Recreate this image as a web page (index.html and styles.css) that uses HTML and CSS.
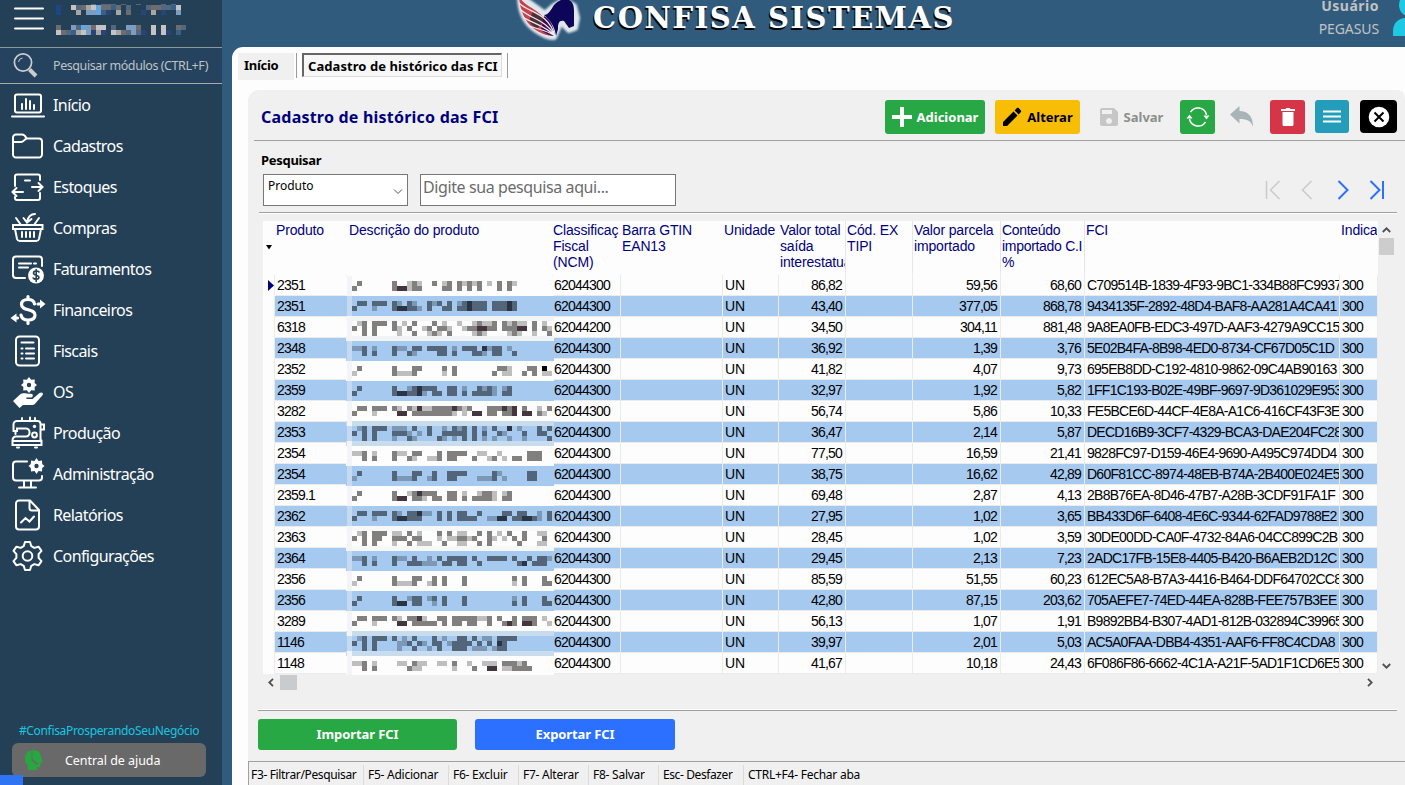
FILE: index.html
```html
<!DOCTYPE html>
<html lang="pt-BR">
<head>
<meta charset="utf-8">
<title>Confisa Sistemas</title>
<link rel="stylesheet" href="styles.css">
</head>
<body>
<div class="app">
  <aside class="sidebar">
    <div class="brand">
      <svg class="burger" width="30" height="24" viewBox="0 0 30 24" stroke="#fff" stroke-width="2" stroke-linecap="round"><path d="M1 2.5h28M1 12.5h28M1 22.5h28"/></svg>
      <svg class="company" id="company" width="132" height="32"></svg>
    </div>
    <div class="search">
      <svg class="search-icon" width="28" height="28" viewBox="0 0 28 28" fill="none" stroke="#c9cdd0"><circle cx="10" cy="9.500" r="8.600" stroke-width="1.700"/><path d="M5.500 9a4.500 4.500 0 0 1 4-4" stroke-width="1"/><path d="M16.500 16.500l6.500 6.500" stroke-width="4"/></svg>
      <span>Pesquisar módulos (CTRL+F)</span>
    </div>
    <nav class="menu">
      <a class="item"><svg viewBox="0 0 36 36"><rect x="5" y="7.500" width="26" height="18" rx="2"/><path d="M2 29.500h32M12 22v-5M16 22v-10M20 22v-8M24 22v-4"/></svg><span>Início</span></a>
      <a class="item"><svg viewBox="0 0 36 36"><path d="M3 9.500a3 3 0 0 1 3-3h6c2 0 3 1 4 3l1 1h12a3 3 0 0 1 3 3v13a3 3 0 0 1-3 3H6a3 3 0 0 1-3-3zM3 14h8c3 0 3-3 6-3.500"/></svg><span>Cadastros</span></a>
      <a class="item"><svg viewBox="0 0 36 36"><path d="M5 17V7.500a2 2 0 0 1 2-2h21a2 2 0 0 1 2 2V11M5 28v1a2 2 0 0 0 2 2h21a2 2 0 0 0 2-2v-5M15 11.500h5"/><path d="M22 18h10.500M28.500 14l4 4-4 4M13 23H2.500M6.500 19l-4 4 4 4"/></svg><span>Estoques</span></a>
      <a class="item"><svg viewBox="0 0 36 36"><path d="M3 15h29.500v4H3zM5 19l2 10a3 3 0 0 0 3 2h16a3 3 0 0 0 3-2l2-10M12 22v5M16 22v5M20 22v5M24 22v5M6 8l5 7M29 8l-5 7M25 4c-5 0-7 3-8 8M13.500 8l3.500 4.500L21.500 9"/></svg><span>Compras</span></a>
      <a class="item"><svg viewBox="0 0 36 36"><path d="M15 27H6a3 3 0 0 1-3-3V8.500a3 3 0 0 1 3-3h23a3 3 0 0 1 3 3V15M9 12.500h12M9 16.500h9M24 12.500h2"/><circle cx="26" cy="24.500" r="8" fill="#fff" stroke="none"/><path class="ink" d="M29 21c-1-1.500-5.500-1.600-5.500 1 0 2.600 5.500 1.800 5.500 4.300s-4.800 2.300-5.800.7M26.200 18.500v12"/></svg><span>Faturamentos</span></a>
      <a class="item"><svg viewBox="0 0 36 36" class="bold"><path d="M24.500 12c-.5-3.500-3-4.500-6.500-4.500-4 0-6.500 1.800-6.500 5 0 7 13.500 3.500 13.500 10.500 0 3.400-3 5-7 5s-6.500-1.800-7-5M18 4.500v3M18 28.500V31.500"/><path d="M28 12h3M7.500 26H4" /><path d="M30 7.500L35.500 12 30 16.500zM6.500 21.500L.5 26l6 4.500z" fill="#fff" stroke="none"/></svg><span>Financeiros</span></a>
      <a class="item"><svg viewBox="0 0 36 36"><rect x="6" y="3.500" width="23" height="29" rx="3.500"/><path d="M11.500 9.500h12M11.500 15.500h1M16 15.500h8M11.500 20.500h1M16 20.500h8M11.500 25.500h1M16 25.500h8"/></svg><span>Fiscais</span></a>
      <a class="item"><svg viewBox="0 0 36 36"><path fill="#fff" stroke="none" d="M19 3l2.200 2.700 3.600-.1-.2 3.400 2.400 2-2.400 2 .2 3.400-3.600-.1L19 19l-2.200-2.700-3.600.1.200-3.400-2.400-2 2.400-2-.2-3.400 3.600.1z"/><circle cx="19" cy="11" r="2.200" fill="#244057" stroke="none"/><path fill="#fff" stroke="none" d="M3 27l6.500-6c2.500-2 5-1.800 8-1.300h3.500c2.500 0 2.500 3.600 0 3.800H17c-1 .2-1 1.400 0 1.500h5.500l7-6c2-1.500 4.500.2 3 2.300l-7.500 8.500c-1 1-2 1.300-4 1.300h-8l-3.500 3z"/></svg><span>OS</span></a>
      <a class="item"><svg viewBox="0 0 36 36"><path d="M4 26h26.500V9a3 3 0 0 0-3-3H7a3.500 3.500 0 0 0-3.500 3.500V16h3.500v-2.500h9a3.500 3.500 0 0 1 3.500 3.500v1a3.500 3.500 0 0 1-3.500 3.500H6c-3 0-3.500 2.500-3.500 4.500v4h29v-4.500M12 6V3M20 6V2.500M25 6V3M5.500 16.500v2.500M31 9.500h3v5h-3"/><circle cx="24.500" cy="20" r="2.400"/><circle cx="24.500" cy="11.500" r="1.700" fill="#fff" stroke="none"/><path d="M7 32.500h2M25 32.500h2"/></svg><span>Produção</span></a>
      <a class="item"><svg viewBox="0 0 36 36"><path d="M17 5.500H6a3 3 0 0 0-3 3v13a3 3 0 0 0 3 3h23a3 3 0 0 0 3-3V20M14 25v5M21 25v5M9 31.500h17"/><path fill="#fff" stroke="none" d="M26.500 2l2 2.900 3.500-.3.200 3.400 2.300 2-2.300 2-.2 3.400-3.500-.3-2 3-2-3-3.500.3-.2-3.400-2.300-2 2.300-2 .2-3.400 3.500.3z"/><circle cx="26.500" cy="10" r="2.200" fill="#244057" stroke="none"/></svg><span>Administração</span></a>
      <a class="item"><svg viewBox="0 0 36 36"><path d="M6 6.500a3 3 0 0 1 3-3h11L29 13v16.500a3 3 0 0 1-3 3H9a3 3 0 0 1-3-3zM19.500 4v7a2.500 2.500 0 0 0 2.500 2.500h6.500M11 25.500l4.500-4.500 4 3.500 4.500-5"/></svg><span>Relatórios</span></a>
      <a class="item"><svg viewBox="0 0 36 36"><path d="M15 4h5l1.300 4.200 3 1.700 4.200-1.200 3 4.200-2.900 3.300v3.600l2.900 3.300-3 4.200-4.200-1.200-3 1.700L20 32h-5l-1.300-4.200-3-1.700-4.200 1.200-3-4.200 2.900-3.300v-3.600L3.500 12.900l3-4.200 4.200 1.200 3-1.700z" stroke-linejoin="round"/><circle cx="17.500" cy="18" r="4.800"/></svg><span>Configurações</span></a>
    </nav>
    <div class="side-foot">
      <div class="hashtag">#ConfisaProsperandoSeuNegócio</div>
      <div class="help">
        <svg width="20" height="22" viewBox="0 0 20 22"><path fill="#27a83e" d="M8.500 1v9l6 5-1.500 1-5.500-4.500V1.200C3 2 1 5.500 1 9.500c0 3.500 1 5 3 7V21h9v-3h3l.5-4 2.500-1.500-2-4C17 4 14 1.300 10 1z"/></svg>
        <span>Central de ajuda</span>
      </div>
    </div>
    <div class="corner"></div>
  </aside>

  <main class="main">
    <header class="top">
      <svg class="logo" width="72" height="46" viewBox="0 0 72 46">
        <defs><filter id="glow" x="-20%" y="-20%" width="140%" height="140%"><feGaussianBlur stdDeviation="1.300"/></filter></defs>
        <g fill="#e8eef2" stroke="#dfe7ec" stroke-width="6" stroke-linejoin="round" filter="url(#glow)"><path d="M4-4c0 14 4 26 16 34 8 5 12 7 18 7l4-9 2-9 4 6 5 5 6-2 2-10-3-12-10-6-10 6-9 8z"/></g>
        <path fill="#c7404b" d="M3-3c9 13 26 12 36 39C31 36 6 32 3-3z"/>
        <path fill="#4b3038" d="M17 11c5 2 9 5 12 9l-8 9c-4-3-6-5-8-8z"/>
        <path fill="#3a0b55" d="M28 16c6 3 9 9 11 20-5 0-10-3-14-6z"/>
        <path fill="#0d0557" d="M28 15c4 0 7-5 10-10 4-4 8-6 13-7l2 2c4 2 5 6 5 11v15l-5 2-5-7c-5-1-6 2-6 8l-2 7c-1-8-4-14-12-21z"/>
        <path fill="none" stroke="#eee8ed" stroke-width="1.200" d="M3 3c10 10 29 9 36 33M4 9c8 9 26 10 35 27M7 17c8 6 22 8 32 19M13 26c8 3 18 4 26 10"/>
      </svg>
      <h1 class="title">CONFISA SISTEMAS</h1>
      <div class="user"><b>Usuário</b><span>PEGASUS</span></div>
      <svg class="avatar" width="40" height="36" viewBox="0 0 40 36" fill="#1fc8e3"><circle cx="18" cy="5" r="12"/><path d="M0 36V31c0-8 6-13 12-13h12c8 0 12 6 12 18z"/></svg>
    </header>
    <section class="sheet">
      <div class="tabs">
        <div class="tab">Início</div>
        <div class="tab-slot"><div class="tab active">Cadastro de histórico das FCI</div></div>
      </div>
      <div class="panel">
        <div class="toolbar">
          <h2>Cadastro de histórico das FCI</h2>
          <div class="btn add"><svg width="20" height="20" viewBox="0 0 20 20"><path stroke="#fff" stroke-width="4" d="M10 0v20M0 10h20"/></svg><span>Adicionar</span></div>
          <div class="btn edit"><svg width="20" height="20" viewBox="0 0 20 20"><path d="M1 15v4h4L15.500 8.500l-4-4zM12.600 3.400l4 4 2.100-2.100c.6-.6.6-1.500 0-2.100l-1.900-1.900c-.6-.6-1.500-.6-2.100 0z"/></svg><span>Alterar</span></div>
          <div class="btn save"><svg width="18" height="18" viewBox="0 0 18 18"><path fill="#c6c6c6" fill-rule="evenodd" d="M2 0h12l4 4v12a2 2 0 0 1-2 2H2a2 2 0 0 1-2-2V2a2 2 0 0 1 2-2zM2 2v4h10V2zM9 10a3 3 0 1 0 .01 0z"/></svg><span>Salvar</span></div>
          <div class="btn refresh"><svg width="24" height="22" viewBox="0 0 24 22" fill="none" stroke="#fff" stroke-width="1.500"><path d="M4.500 6.200A8.700 8.700 0 0 1 20.500 9M3.500 13a8.700 8.700 0 0 0 16 2.800"/><path fill="#fff" stroke="none" d="M.5 12.500l3-4 3 4zM17.500 9.500h6l-3 4z"/></svg></div>
          <svg class="undo" width="24" height="22" viewBox="0 0 24 22"><path fill="#a9b4ba" d="M0 8.500L9.500 0v5C18 5 23 10 23 21c-2-6-5.500-8-13.500-8v4.500z"/></svg>
          <div class="btn trash"><svg width="14" height="18" viewBox="0 0 14 18" fill="#fff"><path d="M0 1h4.500l1-1h3l1 1H14v2H0zM1.500 4h11v12.500a1.500 1.500 0 0 1-1.500 1.500H3a1.500 1.500 0 0 1-1.500-1.500z"/></svg></div>
          <div class="btn list"><svg width="18" height="13" viewBox="0 0 18 13" stroke="#fff" stroke-width="2"><path d="M0 1.500h18M0 6.500h18M0 11.500h18"/></svg></div>
          <div class="btn close"><svg width="22" height="22" viewBox="0 0 22 22"><circle cx="11" cy="11" r="10.300" fill="#fff"/><path stroke="#000" stroke-width="2" d="M6.500 6.500l9 9M15.500 6.500l-9 9"/></svg></div>
        </div>
        <div class="filters">
          <div class="filter-label">Pesquisar</div>
          <div class="fields">
            <div class="select"><span>Produto</span><svg width="10" height="6" viewBox="0 0 10 6" fill="none" stroke="#555"><path d="M1 .5l4 4 4-4"/></svg></div>
            <div class="input">Digite sua pesquisa aqui...</div>
            <div class="pager">
              <svg width="16" height="20" viewBox="0 0 16 20" class="off"><path d="M1.500 1v18M14.500 1l-9 9 9 9"/></svg>
              <svg width="12" height="20" viewBox="0 0 12 20" class="off"><path d="M10.500 1l-9 9 9 9"/></svg>
              <svg width="12" height="20" viewBox="0 0 12 20"><path d="M1.500 1l9 9-9 9"/></svg>
              <svg width="16" height="20" viewBox="0 0 16 20"><path d="M1.500 1l9 9-9 9M14 1v18"/></svg>
            </div>
          </div>
        </div>
        <div class="grid-area">
          <div class="grid" id="grid">
            <div class="row head">
              <div class="mark"><svg width="6" height="6" viewBox="0 0 6 6"><path d="M0 1h6L3 5.500z"/></svg></div>
              <div>Produto</div><div>Descrição do produto</div><div>Classificaç<br>Fiscal<br>(NCM)</div><div>Barra GTIN<br>EAN13</div><div>Unidade</div><div>Valor total<br>saída<br>interestatual</div><div>Cód. EX<br>TIPI</div><div>Valor parcela<br>importado</div><div>Conteúdo<br>importado C.I<br>%</div><div>FCI</div><div>Indica</div>
            </div>
          </div>
          <div class="vbar">
            <svg width="9" height="6" viewBox="0 0 9 6"><path d="M.8 5l3.700-3.700L8.200 5"/></svg>
            <div class="thumb"></div>
            <svg width="9" height="6" viewBox="0 0 9 6"><path d="M.8 1l3.700 3.700L8.200 1"/></svg>
          </div>
        </div>
        <div class="hbar">
          <svg width="6" height="9" viewBox="0 0 6 9"><path d="M5 .8L1.300 4.500 5 8.200"/></svg>
          <div class="thumb"></div>
          <svg width="6" height="9" viewBox="0 0 6 9"><path d="M1 .8l3.700 3.700L1 8.200"/></svg>
        </div>
        <div class="actions">
          <div class="action import">Importar FCI</div>
          <div class="action export">Exportar FCI</div>
        </div>
        <footer class="status">
          <span class="s1">F3- Filtrar/Pesquisar</span><span class="s2">F5- Adicionar</span><span class="s3">F6- Excluir</span><span class="s4">F7- Alterar</span><span class="s5">F8- Salvar</span><span class="s6">Esc- Desfazer</span><span class="s7">CTRL+F4- Fechar aba</span>
        </footer>
      </div>
    </section>
  </main>
</div>
<script src="app.js"></script>
</body>
</html>
```

FILE: styles.css
```css
* { box-sizing: border-box; }
body { margin: 0; font-family: "Noto Sans", sans-serif; overflow: hidden; }
.app { display: flex; width: 1405px; height: 785px; background: #305b7d; overflow: hidden; }

/* sidebar */
.sidebar { position: relative; width: 222px; height: 785px; background: #244057; display: flex; flex-direction: column; color: #fff; }
.brand { height: 48px; border-bottom: 1px solid #8d989f; display: flex; padding: 5px 0 0 14px; gap: 12px; }
.burger { margin-top: 1px; fill: none; }
.company { overflow: visible; }
.search { height: 36px; background: #25435f; border-bottom: 1px solid #a5abad; display: flex; align-items: center; padding-left: 13px; color: #bfc3c5; font-size: 12.5px; white-space: nowrap; }
.search-icon { fill: none; margin: 3px 12px 0 0; flex: none; }
.search span { letter-spacing: -0.42px; }
.menu { display: flex; flex-direction: column; }
.item { height: 41px; display: flex; align-items: center; padding-left: 10px; gap: 7px; font-size: 16px; letter-spacing: -0.58px; white-space: nowrap; line-height: 24px; }
.item svg { width: 36px; height: 36px; fill: none; stroke: #fff; stroke-width: 2; stroke-linecap: round; }
.item svg.bold { stroke-width: 3.200; }
.item svg .ink { stroke: #244057; stroke-width: 1.600; }
.side-foot { margin-top: auto; padding: 0 16px 8px 12px; }
.hashtag { color: #1bc5df; font-size: 12px; text-align: center; line-height: 20px; margin-bottom: 2px; white-space: nowrap; letter-spacing: -0.33px; }
.help { height: 34px; border-radius: 6px; background: #696969; display: flex; align-items: center; padding-left: 12px; gap: 21px; font-size: 12.5px; letter-spacing: -0.05px; white-space: nowrap; }
.corner { position: absolute; left: 0; bottom: 0; width: 23px; height: 10px; background: #2f74f5; }

/* header */
.main { flex: 1; min-width: 0; display: flex; flex-direction: column; padding-left: 10px; }
.top { height: 47px; display: flex; position: relative; z-index: 1; }
.logo { margin-left: 284px; flex: none; overflow: visible; }
.title { margin: 0 0 0 5px; font: bold 29px/36px "DejaVu Serif", serif; color: #fff; text-shadow: -1px 2px 0 #000; white-space: nowrap; width: 400px; height: 36px; letter-spacing: 1.550px; }
.user { margin-left: auto; margin-top: -6px; display: flex; flex-direction: column; text-align: right; color: #c2c2c2; font-size: 14px; line-height: 23px; letter-spacing: -0.1px; }
.user b { letter-spacing: 0.5px; }
.avatar { margin-left: 14px; margin-right: -28px; flex: none; }

/* content */
.sheet { flex: 1; min-height: 0; background: #fdfdfd; border-radius: 11px 0 0 0; padding-left: 6px; }
.tabs { height: 43px; padding-top: 6px; display: flex; font: bold 13px/26px "Noto Sans", sans-serif; color: #000; white-space: nowrap; }
.tab { width: 56px; height: 27px; background: #f0f0f0; padding-left: 6px; letter-spacing: -0.3px; line-height: 25px; }
.tab-slot { margin-left: 2px; width: 212px; height: 25px; border-left: 1px solid #9b9b9b; border-right: 1px solid #9b9b9b; padding-left: 5px; }
.tab.active { width: 200px; height: 24px; line-height: 22px; background: #f7f7f7; border: 1px solid #dcdcdc; border-top: 2px solid #666; border-left: 2px solid #666; padding-left: 4px; letter-spacing: 0.070px; }
.panel { margin-left: 10px; height: 695px; background: #f0f0f0; border-radius: 11px 8px 0 0; display: flex; flex-direction: column; }
.toolbar { height: 51px; margin-left: 6px; padding: 10px 8px 0 7px; border-bottom: 1px solid #a0a0a0; display: flex; align-items: flex-start; }
.toolbar h2 { margin: 0 auto 0 0; font-size: 16px; line-height: 34px; color: #00007e; letter-spacing: 0.220px; white-space: nowrap; }
.btn { height: 34px; border-radius: 3px; display: flex; align-items: center; justify-content: center; font-weight: bold; font-size: 13px; color: #fff; white-space: nowrap; flex: none; gap: 5px; }
.add { width: 100px; background: #28a745; margin-right: 10px; }
.edit { width: 85px; background: #f8bd05; color: #000; margin-right: 18px; }
.save { width: 67px; color: #8b8f8b; margin-right: 15px; gap: 6px; }
.refresh { width: 35px; background: #28a745; margin-right: 15px; }
.undo { margin: 6px 16px 0 0; flex: none; }
.trash { width: 35px; background: #d53546; margin-right: 10px; }
.list { width: 34px; height: 33px; background: #239db9; margin-right: 11px; }
.close { width: 37px; height: 33px; background: #000; border-radius: 4px; }

.filters { height: 73px; margin: 0 8px 0 11px; border-bottom: 1px solid #a0a0a0; box-shadow: 0 1px 0 #fff; padding: 10px 0 0 2px; }
.filter-label { font-weight: bold; font-size: 13px; line-height: 19px; letter-spacing: -0.3px; color: #000; }
.fields { display: flex; padding: 4px 0 0 2px; }
.select { width: 145px; height: 32px; border: 1px solid #777; background: #fff; font-size: 12px; line-height: 22px; padding: 0 4px; display: flex; justify-content: space-between; align-items: flex-start; }
.select svg { margin-top: 14px; }
.input { width: 256px; height: 32px; border: 1px solid #777; background: #fff; margin-left: 12px; padding-left: 2px; font-size: 16px; line-height: 25px; color: #6b6b6b; white-space: nowrap; letter-spacing: -0.4px; }
.pager { margin-left: auto; padding: 6px 12px 0 0; display: flex; }
.pager svg { fill: none; stroke: #2b70ff; stroke-width: 2; margin-left: 20px; }
.pager svg:nth-child(3) { margin-left: 24px; }
.pager .off { stroke: #c9c9c9; stroke-width: 1.500; }

/* table */
.grid-area { display: flex; margin: 8px 0 0 15px; height: 453px; }
.grid { position: relative; width: 1115px; height: 453px; background: #fdfdfd; font: 14px/16px "Liberation Sans", Arial, sans-serif; color: #000; }
.row { display: grid; grid-template-columns: 12px 72px 206px 68px 102px 56px 67px 67px 88px 84px 255px 38px; height: 21px; }
.row > div { border-right: 1px solid #ebebeb; border-bottom: 1px solid #ebebeb; overflow: hidden; white-space: nowrap; line-height: 20px; padding-left: 2px; letter-spacing: -0.8px; }
.row > div:first-child { border-bottom-color: #fdfdfd; padding: 5px 0 0 5px; line-height: 0; }
.row.alt > div { background: #a6c9f0; }
.row.alt > div:first-child { background: #fdfdfd; }
.row > div:nth-child(4) { padding-left: 1px; }
.row > .num { text-align: right; padding-right: 3px; }
.row > .code { letter-spacing: -0.740px; }
.row > .unit { letter-spacing: 0; }
.row.head { height: 54px; color: #00007e; }
.row.head > div { border-color: transparent; line-height: 16px; padding: 1px 0 0 1px; letter-spacing: -0.15px; }
.row.head > div:nth-child(n+7):nth-child(-n+10) { border-right-color: #e2e8ea; }
.row.head > div:nth-child(3) { padding-left: 2px; }
.row.head > div:nth-child(4) { padding-left: 0; }
.row.head > div:nth-child(10) { letter-spacing: -0.3px; }
.row.head > .mark { padding: 23px 0 0 3px; line-height: 0; }
.mosaic { position: absolute; left: 82px; top: 55px; }
.vbar { width: 16px; display: flex; flex-direction: column; align-items: center; padding: 6px 0 5px; fill: none; stroke: #505050; stroke-width: 1.800; }
.vbar .thumb { width: 15px; height: 17px; background: #cdcdcd; margin: 5px 0 auto; }
.hbar { height: 16px; margin: 0 32px 0 20px; display: flex; align-items: center; fill: none; stroke: #505050; stroke-width: 1.800; }
.hbar .thumb { width: 17px; height: 15px; background: #c9cbcc; margin: 0 auto 0 6px; }

.actions { margin: 19px 8px 0 10px; border-top: 1px solid #fff; box-shadow: inset 0 1px 0 #a0a0a0; height: 52px; display: flex; padding-top: 9px; gap: 18px; }
.action { width: 200px; height: 31px; border-radius: 3px; color: #fff; font-weight: bold; font-size: 13px; line-height: 31px; text-align: center; letter-spacing: -0.1px; }
.import { width: 199px; background: #28a745; }
.export { background: #2b70ff; }
.status { flex: 1; border-top: 1px solid #a0a0a0; border-left: 1px solid #a0a0a0; display: flex; padding-top: 3px; font-size: 12px; line-height: 20px; white-space: nowrap; letter-spacing: -0.25px; }
.status span { padding-left: 4px; height: 20px; border-right: 1px solid #dcdcdc; }
.status .s1 { width: 115px; padding-left: 2px; letter-spacing: -0.35px; }
.status .s2 { width: 85px; }
.status .s3 { width: 70px; }
.status .s4 { width: 70px; }
.status .s5 { width: 70px; }
.status .s6 { width: 85px; letter-spacing: -0.4px; }
.status .s7 { border: 0; }
```

FILE: app.js
```js
const rows = [
  ["2351", "62044300", "86,82", "59,56", "68,60", "C709514B-1839-4F93-9BC1-334B88FC9937"],
  ["2351", "62044300", "43,40", "377,05", "868,78", "9434135F-2892-48D4-BAF8-AA281A4CA41"],
  ["6318", "62044200", "34,50", "304,11", "881,48", "9A8EA0FB-EDC3-497D-AAF3-4279A9CC15"],
  ["2348", "62044300", "36,92", "1,39", "3,76", "5E02B4FA-8B98-4ED0-8734-CF67D05C1D"],
  ["2352", "62044300", "41,82", "4,07", "9,73", "695EB8DD-C192-4810-9862-09C4AB90163"],
  ["2359", "62044300", "32,97", "1,92", "5,82", "1FF1C193-B02E-49BF-9697-9D361029E953"],
  ["3282", "62044300", "56,74", "5,86", "10,33", "FE5BCE6D-44CF-4E8A-A1C6-416CF43F3E"],
  ["2353", "62044300", "36,47", "2,14", "5,87", "DECD16B9-3CF7-4329-BCA3-DAE204FC28"],
  ["2354", "62044300", "77,50", "16,59", "21,41", "9828FC97-D159-46E4-9690-A495C974DD4"],
  ["2354", "62044300", "38,75", "16,62", "42,89", "D60F81CC-8974-48EB-B74A-2B400E024E5"],
  ["2359.1", "62044300", "69,48", "2,87", "4,13", "2B8B76EA-8D46-47B7-A28B-3CDF91FA1F"],
  ["2362", "62044300", "27,95", "1,02", "3,65", "BB433D6F-6408-4E6C-9344-62FAD9788E2"],
  ["2363", "62044300", "28,45", "1,02", "3,59", "30DE00DD-CA0F-4732-84A6-04CC899C2B"],
  ["2364", "62044300", "29,45", "2,13", "7,23", "2ADC17FB-15E8-4405-B420-B6AEB2D12C"],
  ["2356", "62044300", "85,59", "51,55", "60,23", "612EC5A8-B7A3-4416-B464-DDF64702CC8"],
  ["2356", "62044300", "42,80", "87,15", "203,62", "705AEFE7-74ED-44EA-828B-FEE757B3EE"],
  ["3289", "62044300", "56,13", "1,07", "1,91", "B9892BB4-B307-4AD1-812B-032894C39965"],
  ["1146", "62044300", "39,97", "2,01", "5,03", "AC5A0FAA-DBB4-4351-AAF6-FF8C4CDA8"],
  ["1148", "62044300", "41,67", "10,18", "24,43", "6F086F86-6662-4C1A-A21F-5AD1F1CD6E5"]
];

const grid = document.getElementById("grid");
rows.forEach((r, i) => {
  const row = document.createElement("div");
  row.className = "row" + (i % 2 ? " alt" : "");
  const arrow = i ? "" : '<svg width="6" height="11" viewBox="0 0 6 11"><path fill="#00007e" d="M0 0l6 5.500L0 11z"/></svg>';
  row.innerHTML = `<div>${arrow}</div><div>${r[0]}</div><div></div><div>${r[1]}</div><div></div><div class="unit">UN</div>` +
    `<div class="num">${r[2]}</div><div></div><div class="num">${r[3]}</div><div class="num">${r[4]}</div><div class="code">${r[5]}</div><div>300</div>`;
  grid.append(row);
});

// Censored descriptions: [top, kind, line, line, ...]; each mark is "cells + shade" on a 5px raster
const blocks = [
  [281, "w", "1b 8b 11a 12b 13a 16b 18a 19b 21b 22a 23b 24a 25b 27a 29b 31b 32a", "0b 8b 9-10c 11a 12-13b 18-19b 21b 23b 25b 29b 31b"],
  [301, "b", "1-2b 4-6b 8b 9a 11b 12a 15b 16a 17b 19b 21a 22b 23c 24-26b 28-30b 31c 32b", "0b 4a 8b 9-10c 11-12b 13a 15b 18-19b 21-22b 23c 24-26b 28-30b 31c 32b"],
  [321, "w", "1a 2b 4-6b 8b 10a 12b 16b 18a 21a 24a 25b 26-27a 28b 30b 31a 32b 33-34a 36b 38a", "0b 2b 4b 8b 9a 11b 14a 15b 17-18b 19a 22a 23-24b 25-26c 27-28b 30-32b 33-34c 36b 38b 39a", "2b 4b 9a 12b 15a 16b 17a 19b 24a 25b 26a 31a 32b 33a 36a 39b"],
  [346, "b", "0-1a 2b 4a 8b 9-10a 12-13b 15-18b 20a 22-24b 26c 27a 28-29b 31a", "2b 4b 8b 11b 12a 17-18b 20b 24-25b 26a 28-29b 32b"],
  [366, "w", "1b 8b 12-13b 18b 20b 29-30b 31a 35-36b 38k", "0a 8b 9-11a 12b 18a 20b 28b 30-31a 34b 36b 38a 39a"],
  [386, "b", "1b 8b 11a 12b 13c 14-16b 19-20b 22a 25b 26a 27b 28a 30a 31b", "0b 8b 9-10c 11-12b 13c 14a 16-17b 19-20b 22b 24-27b 28a 30-31b"],
  [406, "w", "1-2b 4-6b 8b 9a 11b 12a 13c 14-15a 16-19b 20c 21b 22a 23b 27-29b 30c 31b 32c 34b 37a 39b", "0b 4a 9-10c 12-19b 20a 22a 24-25c 27-28b 30-31b 32c 34-35c 37b 38a"],
  [426, "b", "1a 2b 4-6b 8-10a 12b 15b 18a 20b 21a 22b 24b 26a 28b 31c 33a 37b 39b", "0b 2b 4b 8-10b 11a 13a 15b 18-22b 24b 26b 29b 30a 34b 37-38b", "2b 4b 8a 11b 12a 17b 18a 20a 22b 24b 26a 28a 31a 34a 39b"],
  [451, "w", "0-1a 2b 4a 8b 9-10a 12-13b 17b 19-22b 25-26a 29a 35-37b", "2b 4b 8b 11b 12a 15-16a 17b 19-20b 24b 27a 28b 30a 32-33b 35-37b"],
  [471, "b", "1b 8b 12-13b 16b 19-22b 28b 29a 35-36b", "0a 8b 9-11a 12b 15a 16b 19-20b 25-27a 28b 30a 35-36b"],
  [491, "w", "1b 8b 11a 12b 13c 14-16b 19-20b 22a 25a 26-27b 28a 30a 31b", "0b 8b 9-10c 12-13b 14a 16-17b 19-20b 22b 24-27b 28a 30-31b"],
  [511, "b", "1-2b 4-6b 8b 9a 11-12b 13c 14-15a 17b 19b 21-22b 25b 30-31b 33-34b 37a 39b", "0b 4a 8b 9-10c 11-13b 17b 19b 21-24b 27-28a 29-30c 32-33b 34-35c 36b 37a 39b"],
  [531, "w", "1a 2b 4-6b 8-9a 11b 13a 17b 19b 21-22a 25b 27b 29a 31b 34b 37-38a", "0b 2b 4-5b 8-10b 12-13b 17a 19-20a 21-22b 23a 24b 27b 28a 30a 32b 34b 38b", "2b 4b 8a 11b 13-15a 18b 21-22a 25b 27b 33b 37-38a"],
  [556, "b", "0-1a 2b 4a 8b 9-10a 12b 15a 17b 19-22b 24b 27-30b 32b 35b 37-38b 39a", "2b 4b 8b 11-13b 14-16a 18-19b 21-22b 25b 33b 34c 36-38b"],
  [576, "w", "1b 8b 12-13b 16b 18b 22b 32b 34b 38b", "0a 8b 9-11a 12b 15a 16b 18b 22b 32a 34b 38-39b"],
  [596, "b", "1b 8b 11a 12-13b 15a 16b 18b 22b 32a 34b 38b", "0b 8b 9-10c 12-13b 16a 18b 22b 32b 34b 38-39b"],
  [616, "w", "1-2b 4-6b 8b 9a 11-12b 13c 14a 17-18b 20-24b 25-26a 27b 29b 32b 34-36b 38a", "0b 4a 9-10c 12-16b 18b 20-21b 23-24b 27b 30b 31c 32b 34-35c 36b 39a"],
  [636, "b", "1a 2b 4-6b 8b 10a 12b 16b 18a 21-22b 24b 26-27a 29-32b", "0b 2b 4b 9-10a 11b 13b 14a 16-17b 19a 20-23b 25b 27b 29c 30b", "2b 4b 9a 12b 15a 17b 20b 21-22b 24-26a 28a 29-30b"],
  [661, "w", "0-1a 2b 4a 9-10a 12b 13-14a 17-18a 20b 23a 26-27a 28a 30-31b 32b 33a 34b", "2b 4b 11b 12-13a 20a 24b 27-28c 30-31a 32-35b"]
];
const bands = [
  [276, 20, "#fdfdfd"], [296, 20, "#a6c9f0"], [316, 5, "#f2f4f5"], [321, 15, "#fdfdfd"], [336, 5, "#f2f4f5"],
  [341, 20, "#a6c9f0"], [361, 20, "#fdfdfd"], [381, 20, "#a6c9f0"], [401, 20, "#fdfdfd"], [421, 5, "#c9dced"],
  [426, 15, "#a6c9f0"], [441, 5, "#c9dced"], [446, 20, "#fdfdfd"], [466, 20, "#a6c9f0"], [486, 20, "#fdfdfd"],
  [506, 20, "#a6c9f0"], [526, 5, "#f7f8f8"], [531, 15, "#fdfdfd"], [546, 5, "#f7f8f8"], [551, 20, "#a6c9f0"],
  [571, 20, "#fdfdfd"], [591, 20, "#a6c9f0"], [611, 20, "#fdfdfd"], [631, 5, "#c9dced"], [636, 15, "#a6c9f0"],
  [651, 5, "#c9dced"], [656, 19, "#fdfdfd"]
];
const shades = {
  w: { a: "#bfbebf", b: "#81807f", c: "#43363f", k: "#000" },
  b: { a: "#7c98b7", b: "#526579", c: "#2a3442", k: "#000" }
};
const rect = (x, y, w, h, c) => `<rect x="${x}" y="${y}" width="${w}" height="${h}" fill="${c}"/>`;
let art = "";
bands.forEach(([y, h, c]) => {
  art += rect(1, y - 276, 208, h, c);
  art += rect(2, y - 276, 5, h, c === "#a6c9f0" ? "#c4daf0" : "#f3f4f5");
});
blocks.forEach(([top, kind, ...lines]) => lines.forEach((line, n) => line.split(" ").forEach(mark => {
  const [first, last = first] = mark.slice(0, -1).split("-").map(Number);
  art += rect(7 + first * 5, top - 276 + n * 5, (last - first + 1) * 5, 5, shades[kind][mark.slice(-1)]);
})));
grid.insertAdjacentHTML("beforeend", `<svg class="mosaic" width="210" height="399" shape-rendering="crispEdges">${art}</svg>`);

// Censored company name: two lines of coloured cells, [top, height, cells]
const tones = { g: "#6d6c6e", l: "#c6c3c4", a: "#a9a5a3", s: "#7c9dbf", d: "#53677f", n: "#2a4478", b: "#66a5dd", e: "#1f4589", c: "#38618a" };
const nameLines = [
  [-1, 1, ".......d.ddd.d..d....d.d."],
  [0, 5, "e..ldgalbggcg.d...dggddcl"],
  [5, 5, "e...a.ssbcn.a.g..n.a.n..s"],
  [20, 5, "g..sdbsgll.d..ssg..l.l..gd"],
  [25, 5, "lgdcalsnan.lagdsdn.l.ln.c."]
];
document.getElementById("company").innerHTML = nameLines.map(([y, h, cells]) =>
  [...cells].map((ch, i) => tones[ch] ? rect(i * 5, y, 5, h, tones[ch]) : "").join("")).join("");
```
